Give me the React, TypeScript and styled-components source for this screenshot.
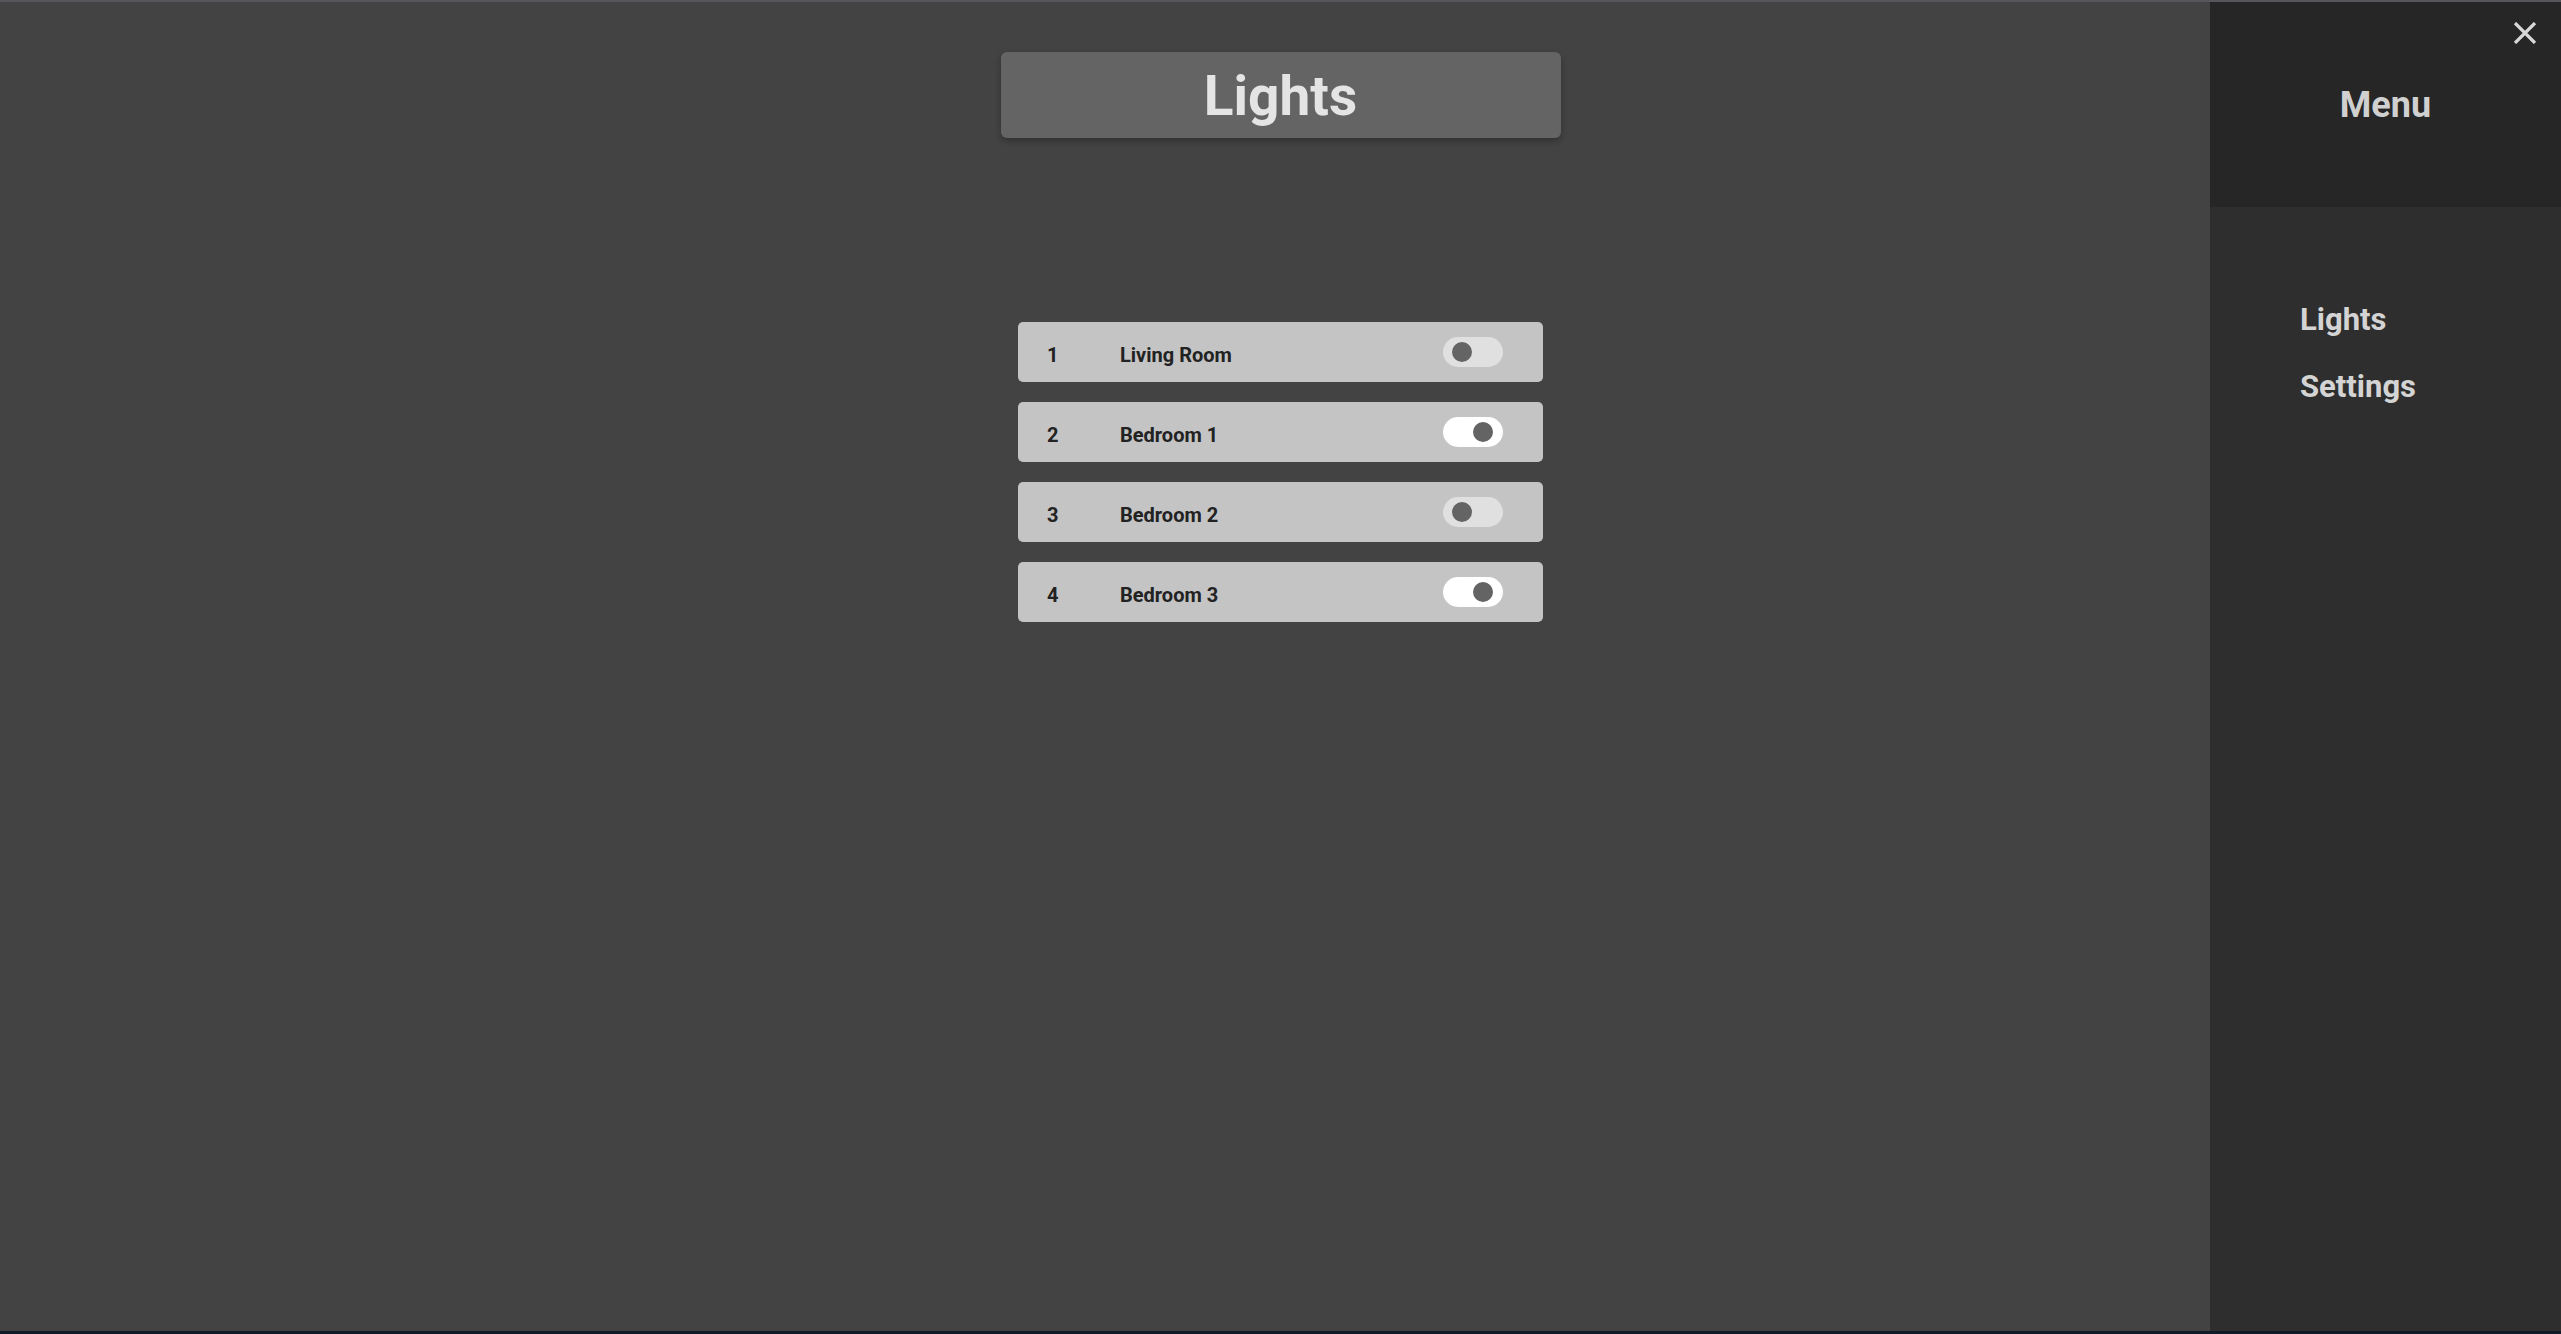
import React, { useState } from "react";
import styled, { createGlobalStyle } from "styled-components";

const GlobalStyle = createGlobalStyle`
  * { box-sizing: border-box; }
  html, body {
    margin: 0;
    padding: 0;
    height: 100%;
    background: #101a29;
    font-family: Roboto, "Noto Sans", "Liberation Sans", sans-serif;
  }
  #root { height: 100%; }
`;

const Page = styled.div`
  height: calc(100vh - 3px);
  background: #434343;
  border-top: 2px solid #56565b;
  display: flex;
  flex-direction: column;
  align-items: center;
  padding-top: 50px;
  overflow: hidden;
`;

const TitleBox = styled.header`
  width: 560px;
  height: 86px;
  background: #646464;
  border-radius: 6px;
  box-shadow: 0 3px 6px rgba(0, 0, 0, 0.28);
  display: flex;
  align-items: center;
  justify-content: center;
  padding-top: 3px;
`;

const Title = styled.h1`
  margin: 0;
  font-size: 55px;
  line-height: 1;
  font-weight: 700;
  color: #e4e4e4;
`;

const List = styled.ul`
  list-style: none;
  margin: 184px 0 0;
  padding: 0;
  display: flex;
  flex-direction: column;
  gap: 20px;
`;

const Row = styled.li`
  width: 525px;
  height: 60px;
  background: #c4c4c4;
  border-radius: 5px;
  display: flex;
  align-items: center;
  padding: 0 40px 0 29px;
`;

const Num = styled.span`
  width: 73px;
  font-size: 20px;
  line-height: 1;
  font-weight: 700;
  color: #222222;
  padding-top: 5px;
`;

const Name = styled.span`
  flex: 1;
  font-size: 20px;
  line-height: 1;
  font-weight: 700;
  color: #222222;
  padding-top: 5px;
`;

const Track = styled.button<{ $on: boolean }>`
  position: relative;
  width: 60px;
  height: 30px;
  border: none;
  padding: 0;
  border-radius: 15px;
  background: ${(p) => (p.$on ? "#ffffff" : "#e0e0e0")};
  cursor: pointer;
`;

const Knob = styled.span<{ $on: boolean }>`
  position: absolute;
  top: 5px;
  left: ${(p) => (p.$on ? "30px" : "9px")};
  width: 20px;
  height: 20px;
  border-radius: 50%;
  background: #646464;
`;

const Sidebar = styled.aside`
  position: fixed;
  top: 0;
  right: 0;
  bottom: 3px;
  width: 351px;
  background: #2e2e2e;
  border-top: 2px solid #56565b;
  display: flex;
  flex-direction: column;
`;

const SideHeader = styled.div`
  position: relative;
  height: 205px;
  background: #262626;
  display: flex;
  align-items: center;
  justify-content: center;
`;

const MenuTitle = styled.h2`
  margin: 0;
  font-size: 36px;
  line-height: 1;
  font-weight: 700;
  color: #d0d0d0;
`;

const CloseButton = styled.button`
  position: absolute;
  top: 20px;
  right: 24px;
  width: 24px;
  height: 22px;
  padding: 0;
  border: none;
  background: transparent;
  display: flex;
  cursor: pointer;
`;

const Nav = styled.nav`
  display: flex;
  flex-direction: column;
  gap: 30px;
  padding: 94px 0 0 90px;
`;

const NavItem = styled.a`
  font-size: 31px;
  line-height: 37px;
  font-weight: 700;
  color: #d4d4d4;
  text-decoration: none;
`;

const rooms = [
  { id: 1, name: "Living Room", on: false },
  { id: 2, name: "Bedroom 1", on: true },
  { id: 3, name: "Bedroom 2", on: false },
  { id: 4, name: "Bedroom 3", on: true },
];

export default function App() {
  const [state, setState] = useState(rooms);
  const toggle = (id: number) =>
    setState((s) => s.map((r) => (r.id === id ? { ...r, on: !r.on } : r)));

  return (
    <>
      <GlobalStyle />
      <Page>
        <TitleBox>
          <Title>Lights</Title>
        </TitleBox>
        <List>
          {state.map((r) => (
            <Row key={r.id}>
              <Num>{r.id}</Num>
              <Name>{r.name}</Name>
              <Track $on={r.on} onClick={() => toggle(r.id)} aria-label={r.name}>
                <Knob $on={r.on} />
              </Track>
            </Row>
          ))}
        </List>
      </Page>
      <Sidebar>
        <SideHeader>
          <MenuTitle>Menu</MenuTitle>
          <CloseButton aria-label="Close">
            <svg width="24" height="22" viewBox="0 0 24 22">
              <path d="M2 1 L22 21 M22 1 L2 21" stroke="#d8d8d8" strokeWidth="3.2" />
            </svg>
          </CloseButton>
        </SideHeader>
        <Nav>
          <NavItem href="#">Lights</NavItem>
          <NavItem href="#">Settings</NavItem>
        </Nav>
      </Sidebar>
    </>
  );
}
